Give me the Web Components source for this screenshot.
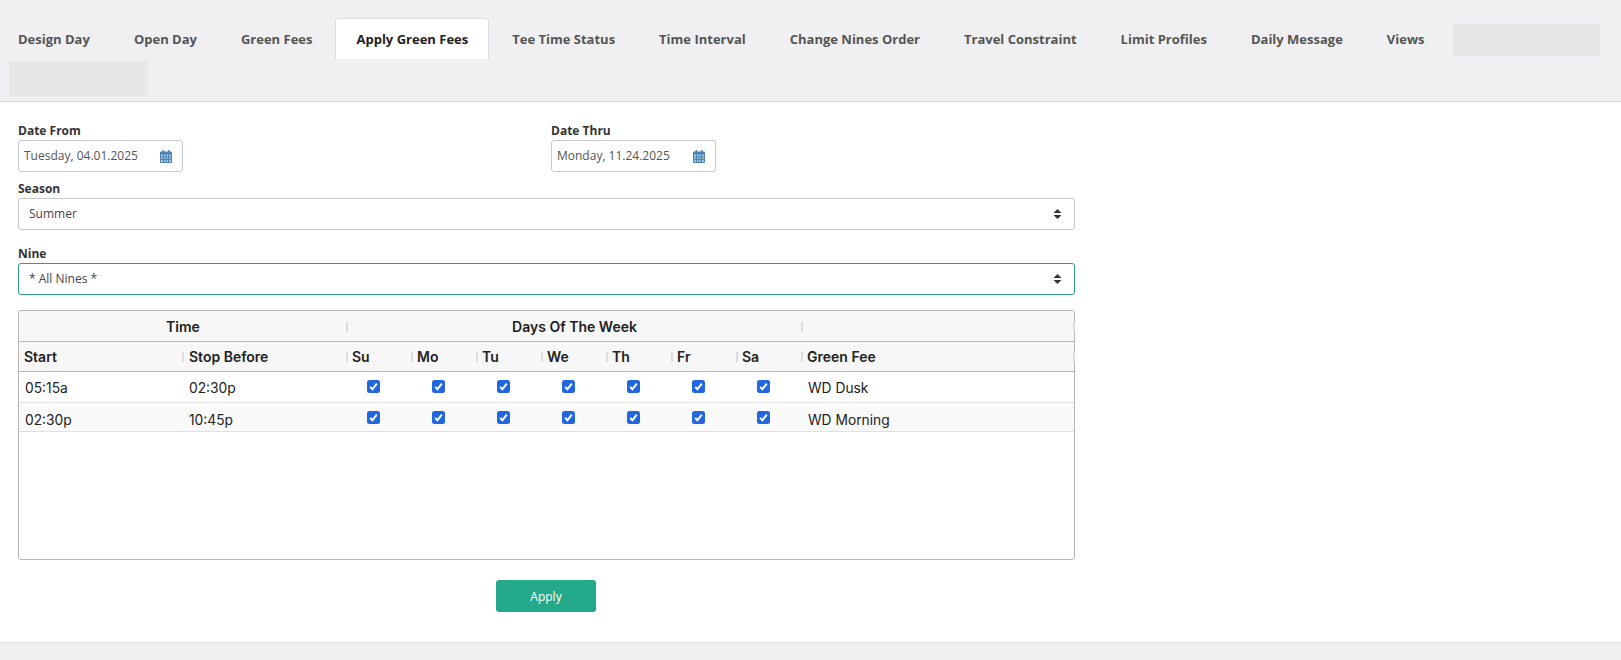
<!DOCTYPE html>
<html>
<head>
<meta charset="utf-8">
<title>Apply Green Fees</title>
<style>
    html, body { margin: 0; background: #fff; }
    body { font-family: "Open Sans", sans-serif; }
</style>
</head>
<body>
<gf-page>
    <gf-tabs>
        <gf-tab>Design Day</gf-tab>
        <gf-tab>Open Day</gf-tab>
        <gf-tab>Green Fees</gf-tab>
        <gf-tab active>Apply Green Fees</gf-tab>
        <gf-tab>Tee Time Status</gf-tab>
        <gf-tab>Time Interval</gf-tab>
        <gf-tab>Change Nines Order</gf-tab>
        <gf-tab>Travel Constraint</gf-tab>
        <gf-tab>Limit Profiles</gf-tab>
        <gf-tab>Daily Message</gf-tab>
        <gf-tab>Views</gf-tab>
        <gf-blank class="one"></gf-blank>
        <gf-blank class="two"></gf-blank>
    </gf-tabs>
    <gf-form>
        <gf-date label="Date From" value="Tuesday, 04.01.2025"></gf-date>
        <gf-date label="Date Thru" value="Monday, 11.24.2025"></gf-date>
        <gf-select slot="wide" label="Season" value="Summer"></gf-select>
        <gf-select slot="wide" label="Nine" value="* All Nines *" focused></gf-select>
        <gf-fee-table slot="wide"></gf-fee-table>
        <gf-button slot="wide">Apply</gf-button>
    </gf-form>
</gf-page>

<script>
class GfPage extends HTMLElement {
    connectedCallback() {
        this.attachShadow({mode: 'open'});
        this.shadowRoot.innerHTML = `
            <style>
                :host { display: flex; flex-direction: column; min-height: 100vh; box-sizing: border-box; }
                main { flex: 1; display: flex; flex-direction: column; }
                footer { height: 17px; background: #f0f0f2; border-top: 1px solid #dcdcdc; }
            </style>
            <main><slot></slot></main>
            <footer></footer>
        `;
    }
}

class GfTabs extends HTMLElement {
    connectedCallback() {
        this.attachShadow({mode: 'open'});
        this.shadowRoot.innerHTML = `
            <style>
                :host {
                    display: flex;
                    flex-wrap: wrap;
                    align-items: flex-start;
                    align-content: flex-start;
                    box-sizing: border-box;
                    height: 102px;
                    padding-top: 18px;
                    background: #f0f0f2;
                    border-bottom: 1px solid #d8d8d8;
                }
                ::slotted(gf-tab:first-child) { margin-left: -4px; }
                ::slotted(gf-blank.one) { margin: 6px 0 0 6px; width: 147px; height: 32px; }
                ::slotted(gf-blank.two) { margin: 2px 0 0 9px; width: 139px; height: 35px; }
            </style>
            <slot></slot>
        `;
    }
}

class GfTab extends HTMLElement {
    connectedCallback() {
        this.attachShadow({mode: 'open'});
        this.shadowRoot.innerHTML = `
            <style>
                :host {
                    display: block;
                    box-sizing: border-box;
                    height: 41px;
                    padding: 0 21px;
                    border: 1px solid transparent;
                    border-bottom: 0;
                    border-radius: 3px 3px 0 0;
                    font: 700 13px/41px "Open Sans", sans-serif;
                    color: #555;
                    white-space: nowrap;
                }
                :host([active]) {
                    margin: 0 1px;
                    padding: 0 20px;
                    background: #fff;
                    border-color: #dcdcdc;
                    color: #222;
                }
            </style>
            <slot></slot>
        `;
    }
}

class GfBlank extends HTMLElement {
    connectedCallback() {
        this.attachShadow({mode: 'open'});
        this.shadowRoot.innerHTML = `<style>:host { display: block; background: #e7e7e7; }</style>`;
    }
}

class GfForm extends HTMLElement {
    connectedCallback() {
        this.attachShadow({mode: 'open'});
        this.shadowRoot.innerHTML = `
            <style>
                :host { display: block; width: 1057px; padding: 21px 0 0 18px; }
                .dates { display: grid; grid-template-columns: 1fr 1fr; column-gap: 9px; }
                .wide { display: flex; flex-direction: column; }
            </style>
            <div class="dates"><slot></slot></div>
            <div class="wide"><slot name="wide"></slot></div>
        `;
    }
}

const CALENDAR = `
    <svg width="12" height="13" viewBox="0 0 12 13">
        <rect x="0" y="1.5" width="12" height="11.5" rx="1" fill="#4a84b4"/>
        <rect x="2.5" y="0" width="1.5" height="3" fill="#4a84b4"/>
        <rect x="8" y="0" width="1.5" height="3" fill="#4a84b4"/>
        <rect x="1" y="4.5" width="10" height="7.5" fill="#a8c8e2"/>
        <path d="M1 7h10M1 9.500h10M3.500 4.500v7.500M6 4.500v7.500M8.500 4.500v7.500" stroke="#4a84b4" stroke-width="1" fill="none"/>
    </svg>`;

class GfDate extends HTMLElement {
    connectedCallback() {
        this.attachShadow({mode: 'open'});
        this.shadowRoot.innerHTML = `
            <style>
                :host { display: block; }
                label { display: block; font: 700 12px/15px "Open Sans", sans-serif; margin-bottom: 2px; color: #333; }
                .box {
                    box-sizing: border-box;
                    display: flex;
                    align-items: center;
                    justify-content: space-between;
                    width: 165px;
                    height: 32px;
                    padding: 0 10px 1px 5px;
                    border: 1px solid #c6cbd0;
                    border-radius: 3px;
                    font: 400 12px "Open Sans", sans-serif;
                    color: #555;
                }
                svg { display: block; margin-top: 1px; }
            </style>
            <label>${this.getAttribute('label')}</label>
            <div class="box"><span>${this.getAttribute('value')}</span>${CALENDAR}</div>
        `;
    }
}

class GfSelect extends HTMLElement {
    connectedCallback() {
        this.attachShadow({mode: 'open'});
        this.shadowRoot.innerHTML = `
            <style>
                :host { display: block; margin-top: 9px; }
                :host([focused]) { margin-top: 16px; }
                label { display: block; font: 700 12px/15px "Open Sans", sans-serif; margin-bottom: 2px; color: #333; }
                .box {
                    box-sizing: border-box;
                    display: flex;
                    align-items: center;
                    justify-content: space-between;
                    height: 32px;
                    padding: 0 12px 1px 10px;
                    border: 1px solid #c6c8ca;
                    border-radius: 3px;
                    font: 400 12px "Open Sans", sans-serif;
                    color: #444;
                }
                :host([focused]) .box { border-color: #2f9c88; }
                svg { display: block; margin-top: 1px; }
            </style>
            <label>${this.getAttribute('label')}</label>
            <div class="box">
                <span>${this.getAttribute('value')}</span>
                <svg width="9" height="10" viewBox="0 0 9 10">
                    <path d="M4.500 0L8.500 4H0.500zM4.500 10L0.500 6H8.500z" fill="#333"/>
                </svg>
            </div>
        `;
    }
}

class GfCheck extends HTMLElement {
    connectedCallback() {
        this.attachShadow({mode: 'open'});
        this.shadowRoot.innerHTML = `
            <style>:host { display: block; width: 13px; height: 13px; } svg { display: block; }</style>
            <svg width="13" height="13" viewBox="0 0 13 13">
                <rect width="13" height="13" rx="2.500" fill="#2267e0"/>
                <path d="M3.200 6.900L5.400 9.300L9.800 3.700" stroke="#fff" stroke-width="2" fill="none"/>
            </svg>
        `;
    }
}

class GfFeeTable extends HTMLElement {
    connectedCallback() {
        this.rows = [
            ['05:15a', '02:30p', 'WD Dusk'],
            ['02:30p', '10:45p', 'WD Morning']
        ];
        this.days = ['Su', 'Mo', 'Tu', 'We', 'Th', 'Fr', 'Sa'];
        this.attachShadow({mode: 'open'});
        this.shadowRoot.innerHTML = this.#makeStyleHTML() + this.#makeHeadHTML() + this.#makeBodyHTML();
    }

    #makeStyleHTML() {
        return `
            <style>
                :host {
                    display: block;
                    box-sizing: border-box;
                    height: 250px;
                    margin-top: 15px;
                    border: 1px solid #b4b4b4;
                    border-radius: 3px;
                    font: 400 14px "Inter", sans-serif;
                    color: #222;
                }
                .row { display: grid; box-sizing: border-box; grid-template-columns: 164px 164px repeat(7, 65px) 1fr; align-items: center; }
                .group { height: 31px; background: #f7f7f7; border-bottom: 1px solid #b8b8c0; grid-template-columns: 328px 455px 1fr; border-radius: 3px 3px 0 0; }
                .names { height: 30px; background: #f7f7f7; border-bottom: 1px solid #b8b8c0; }
                .cell { position: relative; box-sizing: border-box; height: 29px; font-weight: 600; padding-left: 5px; line-height: 30px; white-space: nowrap; }
                .names .cell:nth-child(2) { padding-left: 6px; }
                .group .cell { text-align: center; padding-left: 0; }
                .cell.sep::after {
                    content: "";
                    position: absolute;
                    right: -1px;
                    top: 10px;
                    width: 2px;
                    height: 10px;
                    background: #dcdcdc;
                }
                .data { height: 31px; border-bottom: 1px solid #e0e0e0; }
                .data + .data { height: 29px; background: #fafafa; }
                .data span { padding: 1px 0 0 6px; font-size: 13.8px; }
                .data + .data span { padding-top: 5px; }
                .data gf-check { margin: -1px 0 0 20px; }
                .data + .data gf-check { margin-top: 1px; }
            </style>
        `;
    }

    #makeHeadHTML() {
        let html = `<div class="row group">
            <div class="cell sep">Time</div>
            <div class="cell sep">Days Of The Week</div>
            <div class="cell sep"></div>
        </div>`;
        html += `<div class="row names">
            <div class="cell sep">Start</div>
            <div class="cell sep">Stop Before</div>`;
        for (let day of this.days) {
            html += `<div class="cell sep">${day}</div>`;
        }
        html += `<div class="cell sep">Green Fee</div></div>`;
        return html;
    }

    #makeBodyHTML() {
        let html = '';
        for (let row of this.rows) {
            html += `<div class="row data"><span>${row[0]}</span><span>${row[1]}</span>`;
            for (let i = 0; i < this.days.length; i++) {
                html += `<gf-check></gf-check>`;
            }
            html += `<span>${row[2]}</span></div>`;
        }
        return html;
    }
}

class GfButton extends HTMLElement {
    connectedCallback() {
        this.attachShadow({mode: 'open'});
        this.shadowRoot.innerHTML = `
            <style>
                :host { display: flex; justify-content: center; margin-top: 20px; padding-right: 1px; }
                button {
                    width: 100px;
                    height: 32px;
                    padding: 0;
                    border: 0;
                    border-radius: 3px;
                    background: #24aa8a;
                    color: #fff;
                    font: 400 12px "Open Sans", sans-serif;
                }
            </style>
            <button><slot></slot></button>
        `;
    }
}

customElements.define("gf-check", GfCheck);
customElements.define("gf-page", GfPage);
customElements.define("gf-tabs", GfTabs);
customElements.define("gf-tab", GfTab);
customElements.define("gf-blank", GfBlank);
customElements.define("gf-form", GfForm);
customElements.define("gf-date", GfDate);
customElements.define("gf-select", GfSelect);
customElements.define("gf-fee-table", GfFeeTable);
customElements.define("gf-button", GfButton);
</script>
</body>
</html>
